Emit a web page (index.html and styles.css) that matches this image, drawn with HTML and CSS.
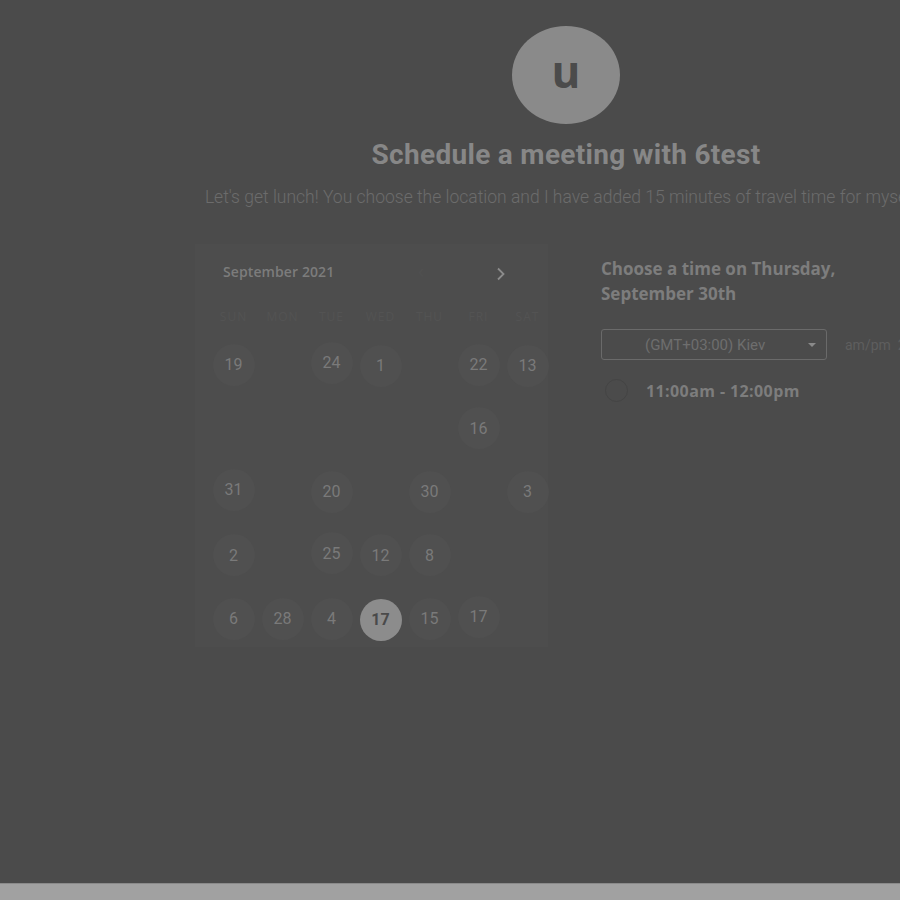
FILE: index.html
```html
<!DOCTYPE html>
<html>
<head>
<meta charset="utf-8">
<link rel="stylesheet" href="styles.css">
</head>
<body>
<div class="screen">
  <main class="page">
    <header class="intro">
      <div class="avatar">u</div>
      <h1 class="title">Schedule a meeting with 6test</h1>
      <p class="desc">Let's get lunch! You choose the location and I have added 15 minutes of travel time for myself.</p>
    </header>
    <section class="content">
      <div class="calendar">
        <div class="cal-head">
          <span class="month">September 2021</span>
          <span class="nav prev">&#8249;</span>
          <span class="nav next">
            <svg width="10" height="14" viewBox="0 0 10 14"><path d="M2 1.5 L7.5 7 L2 12.5" fill="none" stroke="currentColor" stroke-width="1.8"/></svg>
          </span>
        </div>
        <div class="weekdays">
          <span>SUN</span><span>MON</span><span>TUE</span><span>WED</span><span>THU</span><span>FRI</span><span>SAT</span>
        </div>
        <div class="days">
          <span class="day">19</span><span class="empty"></span><span class="day up">24</span><span class="day down">1</span><span class="empty"></span><span class="day">22</span><span class="day down">13</span>
          <span class="empty"></span><span class="empty"></span><span class="empty"></span><span class="empty"></span><span class="empty"></span><span class="day">16</span><span class="empty"></span>
          <span class="day up">31</span><span class="empty"></span><span class="day">20</span><span class="empty"></span><span class="day">30</span><span class="empty"></span><span class="day">3</span>
          <span class="day">2</span><span class="empty"></span><span class="day up">25</span><span class="day">12</span><span class="day">8</span><span class="empty"></span><span class="empty"></span>
          <span class="day">6</span><span class="day">28</span><span class="day">4</span><span class="day selected">17</span><span class="day">15</span><span class="day up">17</span><span class="empty"></span>
        </div>
      </div>
      <div class="times">
        <h2 class="choose">Choose a time on Thursday,<br>September 30th</h2>
        <div class="tz-row">
          <div class="select">
            <span class="select-text">(GMT+03:00) Kiev</span>
            <span class="caret"></span>
          </div>
          <span class="ampm">am/pm</span>
          <span class="h24">24h</span>
        </div>
        <div class="slot">
          <span class="radio"></span>
          <span class="slot-text">11:00am - 12:00pm</span>
        </div>
      </div>
    </section>
  </main>
  <footer class="bottom-bar"></footer>
</div>
</body>
</html>
```

FILE: styles.css
```css
html, body {
  margin: 0;
  padding: 0;
  background: #4b4b4b;
  overflow: hidden;
}
.screen {
  width: 900px;
  height: 900px;
  display: flex;
  flex-direction: column;
  overflow: hidden;
}
.page {
  flex: 1;
  width: 1132px;
}
.intro {
  display: flex;
  flex-direction: column;
  align-items: center;
  padding-top: 26px;
}
.avatar {
  width: 108px;
  height: 98px;
  border-radius: 50%;
  background: #8a8a8a;
  color: #4b4b4b;
  font-family: "Open Sans", sans-serif;
  font-weight: 700;
  font-size: 44px;
  line-height: 90px;
  text-align: center;
}
.title {
  margin: 14px 0 0;
  font-family: Roboto, sans-serif;
  font-weight: 700;
  font-size: 28px;
  line-height: 34px;
  color: #878787;
  letter-spacing: 0.3px;
}
.desc {
  margin: 14px 0 0 -6px;
  font-family: Roboto, sans-serif;
  font-weight: 300;
  font-size: 17.5px;
  line-height: 22px;
  color: #6c6c6c;
  white-space: nowrap;
}
.content {
  display: flex;
  padding-left: 195px;
  margin-top: 36px;
}
.calendar {
  width: 353px;
  height: 403px;
  box-sizing: border-box;
  background: #4d4d4d;
  padding: 17px 0 0 14px;
}
.cal-head {
  display: flex;
  align-items: center;
  height: 20px;
  padding-left: 14px;
  font-family: "Open Sans", sans-serif;
}
.month {
  font-size: 14px;
  font-weight: 600;
  color: #7c7c7c;
  letter-spacing: 0.1px;
  width: 195px;
}
.nav {
  color: #8c8c8c;
}
.prev {
  color: #505050;
  font-size: 20px;
  width: 78px;
  line-height: 20px;
}
.next {
  display: flex;
  padding-top: 6px;
}
.weekdays {
  display: grid;
  grid-template-columns: repeat(7, 49px);
  margin-top: 25px;
  height: 20px;
  align-items: center;
  font-family: "Open Sans", sans-serif;
  font-size: 12px;
  color: #535353;
  letter-spacing: 1px;
}
.weekdays span {
  text-align: center;
}
.days {
  display: grid;
  grid-template-columns: repeat(7, 49px);
  grid-auto-rows: 63.5px;
  margin-top: 7px;
}
.days span {
  display: flex;
  align-items: center;
  justify-content: center;
}
.day {
  width: 42px;
  height: 42px;
  margin: auto;
  border-radius: 50%;
  background: #505050;
  font-family: Roboto, sans-serif;
  font-size: 16px;
  color: #7a7a7a;
}
.day.up {
  transform: translateY(-2px);
}
.day.down {
  transform: translateY(1px);
}
.day.selected {
  background: #8c8c8c;
  color: #4a4a4a;
  font-weight: 700;
  transform: translateY(1px);
}
.times {
  margin-left: 53px;
  padding-top: 12px;
}
.choose {
  margin: 0;
  font-family: "Open Sans", sans-serif;
  font-weight: 700;
  font-size: 17px;
  line-height: 25px;
  color: #7d7d7d;
  white-space: nowrap;
}
.tz-row {
  display: flex;
  align-items: center;
  margin-top: 23px;
}
.select {
  width: 226px;
  height: 31px;
  box-sizing: border-box;
  border: 1px solid #6a6a6a;
  border-radius: 3px;
  display: flex;
  align-items: center;
  padding-left: 43px;
  padding-right: 10px;
}
.select-text {
  flex: 1;
  font-family: Roboto, sans-serif;
  font-size: 15px;
  color: #6e6e6e;
}
.caret {
  width: 0;
  height: 0;
  border-left: 4px solid transparent;
  border-right: 4px solid transparent;
  border-top: 4px solid #8a8a8a;
}
.ampm {
  margin-left: 18px;
  font-family: Roboto, sans-serif;
  font-size: 14px;
  color: #5e5e5e;
  white-space: nowrap;
}
.h24 {
  margin-left: 7px;
  font-family: Roboto, sans-serif;
  font-size: 14px;
  color: #5e5e5e;
  white-space: nowrap;
}
.slot {
  display: flex;
  align-items: center;
  margin-top: 19px;
  padding-left: 4px;
}
.radio {
  width: 23px;
  height: 23px;
  border-radius: 50%;
  border: 1px solid #444444;
  box-sizing: border-box;
}
.slot-text {
  margin-left: 18px;
  font-family: "Open Sans", sans-serif;
  font-weight: 700;
  font-size: 16px;
  letter-spacing: 0.4px;
  color: #7d7d7d;
}
.bottom-bar {
  height: 16px;
  flex: none;
  background: #a1a1a1;
  border-top: 1px solid #8a8a8a;
}
```
